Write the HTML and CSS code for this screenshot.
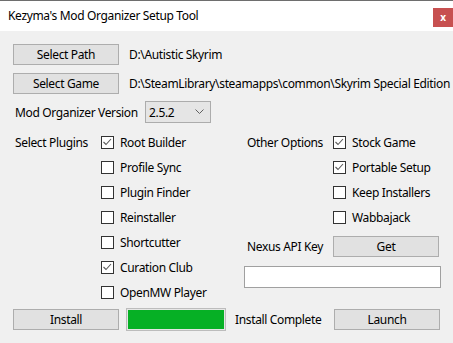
FILE: index.html
```html
<!DOCTYPE html>
<html lang="en">
<head>
    <meta charset="UTF-8">
    <meta name="viewport" content="width=device-width, initial-scale=1.0">
    <title>Kezyma's Mod Organizer Setup Tool</title>
    <link rel="stylesheet" href="styles.css">
</head>
<body>
    <div class="window">
        <div class="titlebar">
            <span class="title">Kezyma's Mod Organizer Setup Tool</span>
            <div class="close-btn">x</div>
        </div>
        <div class="content">
            <div class="path-row">
                <button class="btn">Select Path</button>
                <span class="path-text">D:\Autistic Skyrim</span>
            </div>
            <div class="path-row second">
                <button class="btn">Select Game</button>
                <span class="path-text">D:\SteamLibrary\steamapps\common\Skyrim Special Edition</span>
            </div>
            <div class="version-row">
                <span class="version-label">Mod Organizer Version</span>
                <div class="combo">
                    <span>2.5.2</span>
                    <svg width="9" height="6" viewBox="0 0 9 6"><path d="M0.5 0.5 L4.5 4.5 L8.5 0.5" fill="none" stroke="#606060" stroke-width="1"/></svg>
                </div>
            </div>
            <div class="options">
                <div class="group">
                    <span class="group-label">Select Plugins</span>
                    <div class="check-list">
                        <div class="check-item"><span class="box checked"><svg width="11" height="11" viewBox="0 0 11 11"><path d="M1.5 5 L4 7.5 L9 2" fill="none" stroke="#5a5a5a" stroke-width="1.1"/></svg></span>Root Builder</div>
                        <div class="check-item"><span class="box"></span>Profile Sync</div>
                        <div class="check-item"><span class="box"></span>Plugin Finder</div>
                        <div class="check-item"><span class="box"></span>Reinstaller</div>
                        <div class="check-item"><span class="box"></span>Shortcutter</div>
                        <div class="check-item"><span class="box checked"><svg width="11" height="11" viewBox="0 0 11 11"><path d="M1.5 5 L4 7.5 L9 2" fill="none" stroke="#5a5a5a" stroke-width="1.1"/></svg></span>Curation Club</div>
                        <div class="check-item"><span class="box"></span>OpenMW Player</div>
                    </div>
                </div>
                <div class="right-col">
                    <div class="group right">
                        <span class="group-label">Other Options</span>
                        <div class="check-list">
                            <div class="check-item"><span class="box checked"><svg width="11" height="11" viewBox="0 0 11 11"><path d="M1.5 5 L4 7.5 L9 2" fill="none" stroke="#5a5a5a" stroke-width="1.1"/></svg></span>Stock Game</div>
                            <div class="check-item"><span class="box checked"><svg width="11" height="11" viewBox="0 0 11 11"><path d="M1.5 5 L4 7.5 L9 2" fill="none" stroke="#5a5a5a" stroke-width="1.1"/></svg></span>Portable Setup</div>
                            <div class="check-item"><span class="box"></span>Keep Installers</div>
                            <div class="check-item"><span class="box"></span>Wabbajack</div>
                        </div>
                    </div>
                    <div class="nexus-row">
                        <span class="group-label">Nexus API Key</span>
                        <button class="btn">Get</button>
                    </div>
                    <div class="api-input"></div>
                </div>
            </div>
            <div class="bottom-row">
                <button class="btn">Install</button>
                <div class="progress"><div class="progress-fill"></div></div>
                <span class="status">Install Complete</span>
                <button class="btn">Launch</button>
            </div>
        </div>
    </div>
</body>
</html>
```

FILE: styles.css
```css
body {
    margin: 0;
    background-color: #f0f0f0;
    font-family: 'Segoe UI', 'Noto Sans', sans-serif;
    font-size: 12px;
    letter-spacing: -0.35px;
    color: #000000;
}

.window {
    width: 453px;
    height: 343px;
    overflow: hidden;
}

.titlebar {
    display: flex;
    justify-content: space-between;
    align-items: flex-start;
    height: 30px;
    border-top: 1px solid #6e6e6e;
    background-color: #ffffff;
}

.title {
    margin-left: 8px;
    line-height: 30px;
}

.close-btn {
    width: 20px;
    height: 19px;
    margin-top: 7px;
    background-color: #c75050;
    color: #ffffff;
    font-weight: bold;
    font-size: 10px;
    line-height: 18px;
    text-align: center;
}

.content {
    padding: 13px 0 0 13px;
}

.btn {
    flex-shrink: 0;
    width: 106px;
    height: 21px;
    padding: 0;
    background-color: #e1e1e1;
    border: 1px solid #adadad;
    font-family: inherit;
    font-size: 12px;
    letter-spacing: inherit;
    color: #000000;
}

.path-row {
    display: flex;
    align-items: center;
    gap: 10px;
}

.path-row.second {
    margin-top: 8px;
}

.path-text {
    white-space: nowrap;
}

.version-row {
    display: flex;
    align-items: center;
    margin-top: 7px;
}

.version-label {
    flex-shrink: 0;
    width: 130px;
    padding-left: 2px;
    white-space: nowrap;
}

.combo {
    display: flex;
    justify-content: space-between;
    align-items: center;
    flex-shrink: 0;
    padding: 0 6px 0 3px;
    box-sizing: border-box;
    width: 66px;
    height: 22px;
    background-color: #e5e5e5;
    border: 1px solid #acacac;
}

.options {
    display: grid;
    grid-template-columns: 231px 197px;
    margin-top: 7px;
}

.group {
    display: flex;
}

.group-label {
    flex-shrink: 0;
    width: 86px;
    padding-left: 2px;
    line-height: 25px;
    white-space: nowrap;
}

.right .group-label,
.nexus-row .group-label {
    width: 86px;
    padding-left: 3px;
}

.check-item {
    display: flex;
    align-items: center;
    gap: 6px;
    height: 25px;
    white-space: nowrap;
}

.box {
    display: flex;
    align-items: center;
    justify-content: center;
    width: 13px;
    height: 13px;
    box-sizing: border-box;
    border: 1px solid #333333;
    background-color: #ffffff;
}

.nexus-row {
    display: flex;
    align-items: center;
    margin-top: 4px;
}

.api-input {
    width: 197px;
    height: 22px;
    margin-top: 7px;
    box-sizing: border-box;
    background-color: #ffffff;
    border: 1px solid #a0a0a0;
}

.bottom-row {
    display: flex;
    align-items: center;
    margin-top: 3px;
}

.progress {
    flex-shrink: 0;
    width: 100px;
    height: 23px;
    margin-left: 7px;
    box-sizing: border-box;
    border: 1px solid #bcbcbc;
    padding: 1px;
    background-color: #e6e6e6;
}

.progress-fill {
    height: 100%;
    background-color: #06b025;
}

.status {
    flex-shrink: 0;
    width: 99px;
    margin-left: 9px;
    white-space: nowrap;
}
```
